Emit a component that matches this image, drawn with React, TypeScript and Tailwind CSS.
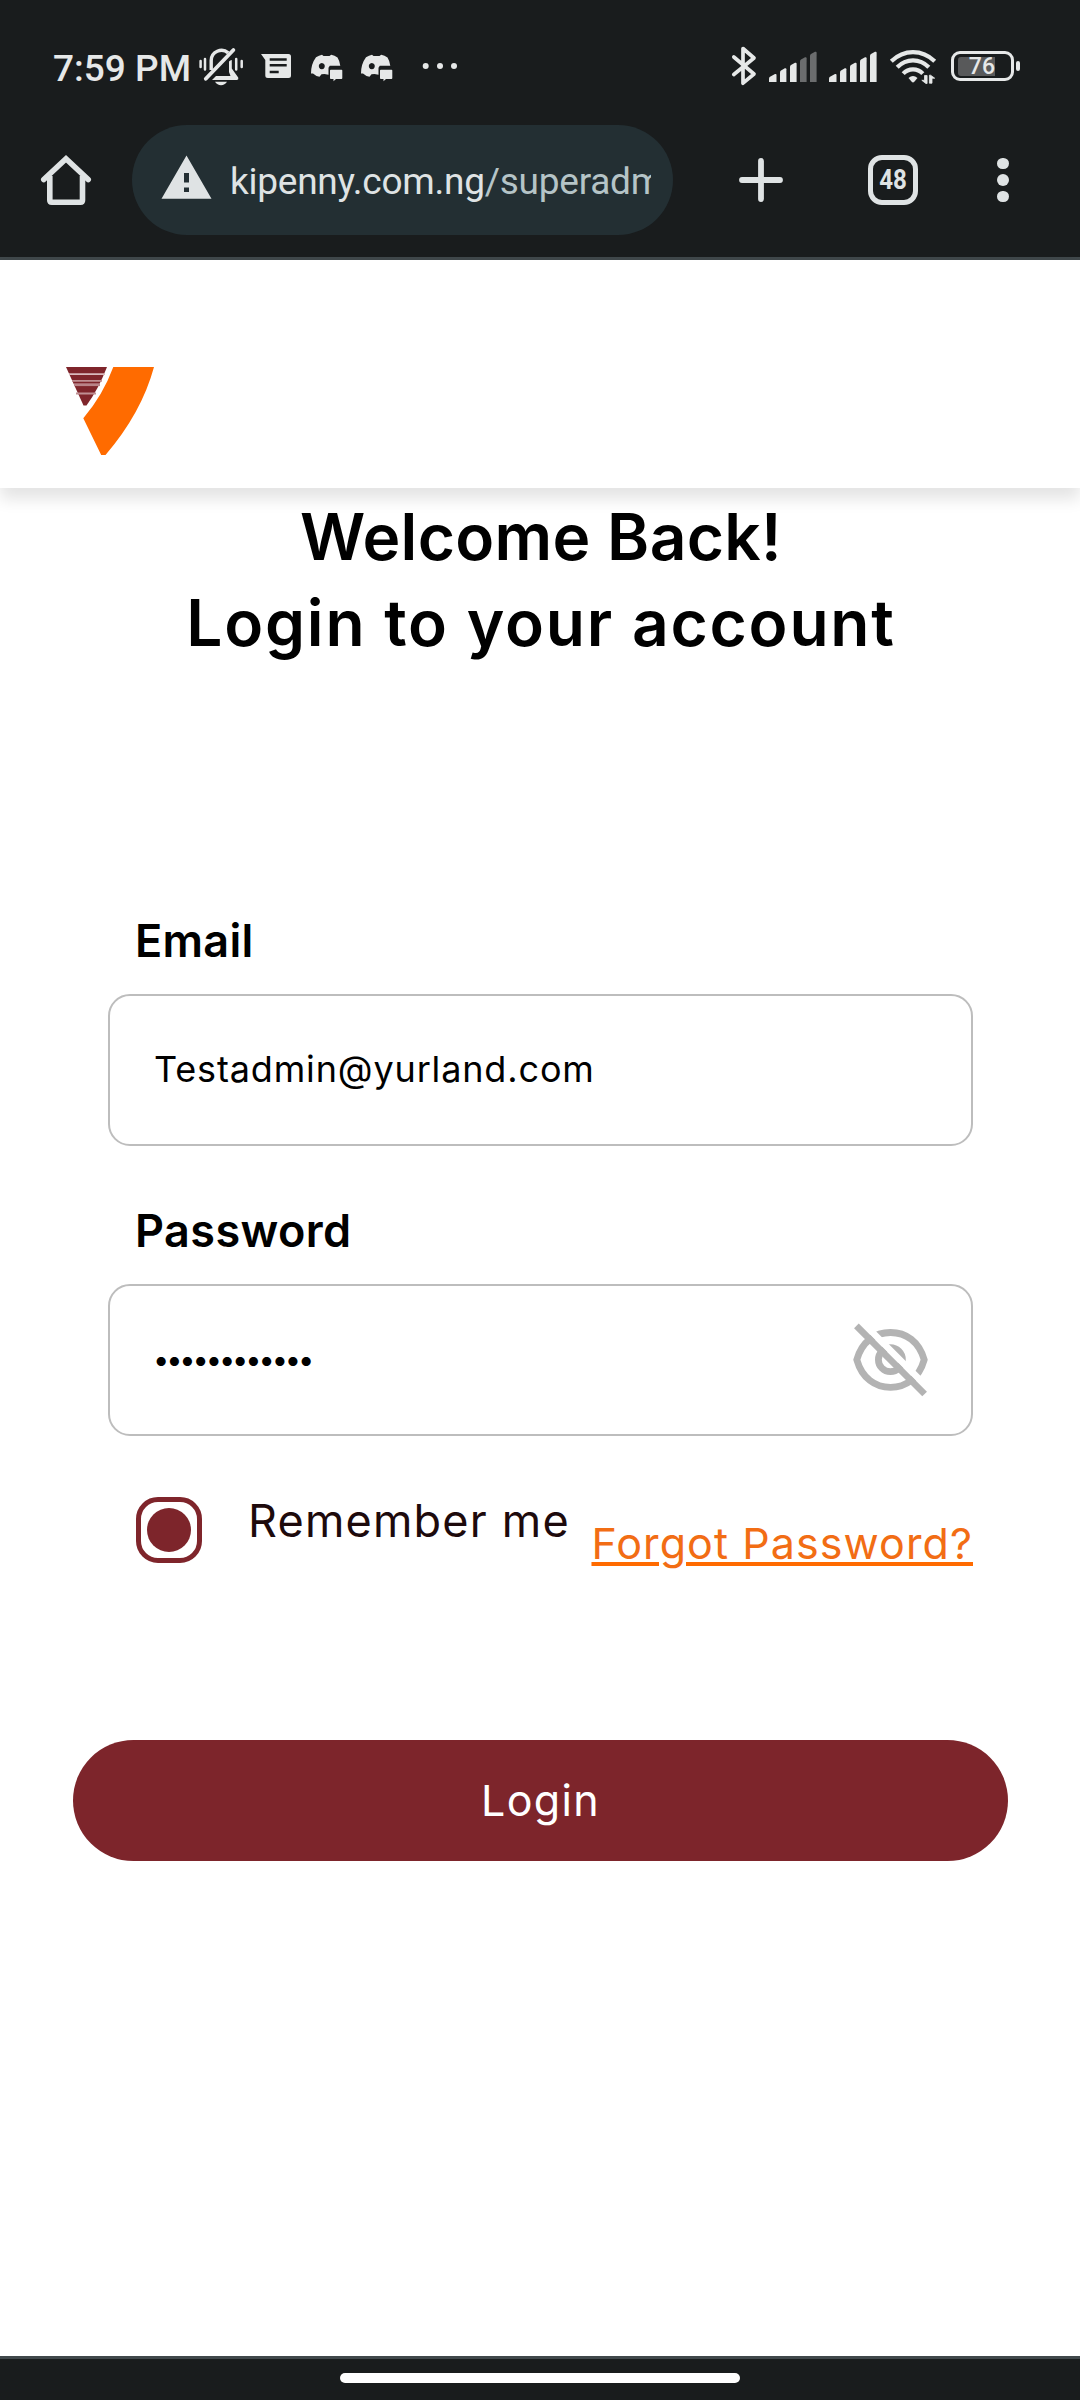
const LIGHT = "#e6e8e8";

function MutedBell() {
  return (
    <svg className="ml-[7px] h-[44px] w-[47px] shrink-0" viewBox="198 45 47 44" fill="none" stroke={LIGHT}>
      <path d="M200.6 61v6M205 59v10.5M236.2 59v10.5M241.7 61v6" strokeWidth="2.5" strokeLinecap="round" />
      <path d="M211.2 70V60.5a10.3 10.3 0 0 1 17-7.6" strokeWidth="3.4" />
      <path d="M205.8 78.8 233.4 50" strokeWidth="3.8" strokeLinecap="round" />
      <path d="M229 61.5q1.200-1.500 2.800-1.500v8.500l6.400 9q.8 2.200-1.200 2.500H212l4-4h14.500l-1.500-4z" fill={LIGHT} stroke="none" />
      <path d="M215 81.8h12q-2.200 3.400-6 3.400t-6-3.400z" fill={LIGHT} stroke="none" />
    </svg>
  );
}

function MessageIcon() {
  return (
    <svg className="ml-[15px] h-[44px] w-[32px] shrink-0" viewBox="260 45 32 44">
      <path d="M261 54h27.500q2.500 0 2.500 2.500v19q0 2.500-2.500 2.500h-20.700q-2.500 0-2.500-2.500V60z" fill={LIGHT} />
      <path d="M269.700 59.500h17M269.700 65.300h17M269.700 72h9" stroke="#191c1d" strokeWidth="2.400" />
    </svg>
  );
}

function DiscordIcon({ className }: { className: string }) {
  return (
    <svg className={className} viewBox="310 45 34 44" fill={LIGHT}>
      <path
        fillRule="evenodd"
        d="M311 73.500Q311 64 316 57.300q3-2 6-2.500l1.500 1.200h6l1.700-1.200q3.500.8 6.300 2.800 2.300 3.700 2.800 8.100h-10.500l-1.300 2v7l-4-.6q-1.500 0-3 .2l-2 2.500q-4-.8-6.500-3.300zM321.800 63a3 3.100 0 1 0 .01 0z"
      />
      <path d="M330.800 69.700h10.700q.8 0 .8.800V78q0 .9-.8.900H336l-2.500 2.400v-2.400h-2.700q-.8 0-.8-.9v-7.500q0-.8.800-.8z" />
    </svg>
  );
}

function BluetoothIcon() {
  return (
    <svg className="h-[44px] w-[28px] shrink-0" viewBox="729 45 28 44" fill="none" stroke={LIGHT} strokeWidth="3.700" strokeLinejoin="round" strokeLinecap="round">
      <path d="M732.800 57l20.200 17-11 9.200V48.500L753 58l-20.200 16.500" />
    </svg>
  );
}

function SignalIcon({ level }: { level: number }) {
  const bars = [
    "M769 82v-3.500q0-1 1-1.700l5-2.800q1.500-.5 1.500 1V82z",
    "M780 82V72.500q0-1.300 1-2l3.800-2.200q1.600-.6 1.600.900V82z",
    "M790 82V67q0-1.300 1-2l4-2.200q1.600-.6 1.600.900V82z",
    "M800 82V61.500q0-1.300 1-2l4-2.200q1.600-.6 1.600.900V82z",
    "M810 82V56q0-1.300 1-2l4-2.200q1.600-.6 1.600.900V82z",
  ];
  return (
    <svg className="ml-[10px] h-[44px] w-[50px] shrink-0" viewBox="768 45 50 44">
      {bars.map((d, i) => (
        <path key={d} d={d} fill={i < level ? LIGHT : "#6b6d6e"} />
      ))}
    </svg>
  );
}

function WifiIcon() {
  return (
    <svg className="ml-[10px] h-[44px] w-[50px] shrink-0" viewBox="888 45 50 44" fill="none" stroke={LIGHT} strokeWidth="4.200">
      <path d="M891.300 61.200q9.500-9.100 21.700-9.100t21.700 9.100" />
      <path d="M897.200 67.300q6.800-6.900 15.800-6.900t15.800 6.900" />
      <path d="M903.200 73.600q4-4.300 9.800-4.300t9.800 4.300" />
      <path d="M908.500 78q4.500-3.800 9 0l-3.200 3.800q-1.300 1.300-2.600 0z" fill={LIGHT} stroke="none" />
      <path d="M921.800 80.300h2.700V75.500h2.600v8h-1.200zM934.700 78.200H932v5h-2.600v-8h1.200z" fill={LIGHT} stroke={LIGHT} strokeWidth="0.800" />
    </svg>
  );
}

function Battery() {
  return (
    <div className="ml-[13px] flex items-center pb-[2px]">
      <div className="flex h-[30px] w-[63px] items-center rounded-[9px] border-[3px] border-[#e6e8e8] pl-[4px]">
        <div className="flex h-[19px] w-[37px] items-center justify-end rounded-l-[3px] bg-[#58595a] text-[23px] leading-[19px] font-medium text-[#e6e8e8]">
          76
        </div>
      </div>
      <div className="ml-[2px] h-[10px] w-[4px] rounded-[2px] bg-[#e6e8e8]" />
    </div>
  );
}

function StatusBar() {
  return (
    <div className="flex h-[89px] items-end pr-[60px] pl-[53px]">
      <span className="h-[44px] w-[138px] shrink-0 pt-[2px] text-[37px] leading-[44px] font-medium whitespace-nowrap text-[#e6e8e8]">
        7:59 PM
      </span>
      <MutedBell />
      <MessageIcon />
      <DiscordIcon className="ml-[18px] h-[44px] w-[34px] shrink-0" />
      <DiscordIcon className="ml-[16px] h-[44px] w-[34px] shrink-0" />
      <svg className="ml-[26px] h-[44px] w-[40px] shrink-0" viewBox="420 45 40 44" fill={LIGHT}>
        <circle cx="425.700" cy="66" r="3" />
        <circle cx="440" cy="66" r="3" />
        <circle cx="454" cy="66" r="3" />
      </svg>
      <div className="ml-auto flex h-[44px] items-center">
        <BluetoothIcon />
        <SignalIcon level={3} />
        <SignalIcon level={5} />
        <WifiIcon />
        <Battery />
      </div>
    </div>
  );
}

function BrowserBar() {
  return (
    <div className="mt-[36px] flex h-[110px] items-center pl-[40px]">
      <svg className="h-[52px] w-[52px] shrink-0" viewBox="40 154 52 52" fill="none" stroke="#dfe3e4" strokeWidth="5.600">
        <path d="M49.800 176v24.300q0 2 2 2h28.700q2 0 2-2V176" />
        <path d="M43.800 179.500 66 158.800l22.200 20.700" strokeLinecap="round" />
      </svg>
      <div className="ml-[40px] flex h-[110px] w-[541px] shrink-0 items-center rounded-full bg-[#232f33] pl-[29px]">
        <svg className="h-[52px] w-[52px] shrink-0" viewBox="161 154 52 52">
          <path fillRule="evenodd" d="M161.500 198.800 186.500 155.500 211.500 198.800zM184 173v9.500h5V173zM184 187.500v4.500h5v-4.500z" fill="#dfe3e4" />
        </svg>
        <div className="ml-[17px] w-[421px] overflow-hidden pt-[3px] text-[37px] leading-[50px] tracking-[-0.250px] whitespace-nowrap text-[#dfe3e4]">
          kipenny.com.ng<span className="text-[#b5c4c7]">/superadm</span>
        </div>
      </div>
      <svg className="ml-[62px] h-[52px] w-[52px] shrink-0" viewBox="735 154 52 52" stroke="#dfe3e4" strokeWidth="5.800" strokeLinecap="round">
        <path d="M761 161v38M742 180h38" />
      </svg>
      <div className="ml-[81px] flex h-[50px] w-[50px] shrink-0 items-center justify-center rounded-[14px] border-[5.500px] border-[#dfe3e4]">
        <span className="scale-x-[0.86] text-[28px] leading-[38px] font-bold text-[#dfe3e4]">48</span>
      </div>
      <div className="ml-[79px] flex flex-col gap-[5px]">
        <i className="size-[11.600px] rounded-full bg-[#dfe3e4]" />
        <i className="size-[11.600px] rounded-full bg-[#dfe3e4]" />
        <i className="size-[11.600px] rounded-full bg-[#dfe3e4]" />
      </div>
    </div>
  );
}

function Logo() {
  return (
    <svg className="h-[88px] w-[88px]" viewBox="66 367 88 88">
      <path d="M66 367h41q-8.500 22-20.500 38.500h-3z" fill="#7f252b" />
      <path d="M69 374.200h36" stroke="#d9b9bc" strokeWidth="1.800" />
      <path d="M72 380.800h30M76 393.500h20" stroke="#c08f93" strokeWidth="1.800" />
      <path d="M74 384.700h26" stroke="#b98388" strokeWidth="2.800" />
      <path d="M113.300 367H154q-12.500 46-48.500 88h-4.300L83.300 418.300Q103 395 113.300 367z" fill="#ff6b00" />
    </svg>
  );
}

function EyeOff() {
  return (
    <svg className="h-[76px] w-[78px]" viewBox="852 1321 78 76" fill="none" stroke="#b3b3b3" strokeWidth="6.800">
      <path d="M856.800 1358.700C862 1340.500 875 1331.500 890.500 1331.500S919 1340.500 924.200 1358.700C919 1377 906 1386.400 890.500 1386.400S862 1377 856.800 1358.700z" />
      <circle cx="890.400" cy="1358.700" r="12" />
      <path d="M859 1318 931 1390" stroke="#fff" strokeWidth="6.600" />
      <path d="M856.400 1324.800 924.600 1393" strokeWidth="6.600" />
    </svg>
  );
}

export default function App() {
  return (
    <div className="flex h-[2400px] w-[1080px] flex-col overflow-hidden bg-white font-['Inter',sans-serif] text-black">
      <div className="h-[260px] shrink-0 border-b-[3px] border-[#40484b] bg-[#191c1d] font-['Roboto',sans-serif]">
        <StatusBar />
        <BrowserBar />
      </div>

      <header className="h-[228px] shrink-0 bg-white pt-[107px] pl-[66px] shadow-[0_11px_15px_rgba(0,0,0,0.11)]">
        <Logo />
      </header>

      <main className="flex flex-1 flex-col">
        <h1 className="relative pt-[6px] text-center text-[64px] leading-[86px] font-semibold">
          <span className="block pl-[2px] tracking-[0.330px]">Welcome Back!</span>
          <span className="block pl-[2px] tracking-[1.800px]">Login to your account</span>
        </h1>

        <form className="mt-[245px] flex flex-col pr-[107px] pl-[108px]">
          <label className="pl-[27px] text-[45px] leading-[60px] font-semibold tracking-[0.300px]">Email</label>
          <div className="mt-[23px] flex h-[152px] items-center rounded-[22px] border-2 border-[#bdbdbd] pb-[2px] pl-[44px] text-[36px] tracking-[0.850px]">
            Testadmin@yurland.com
          </div>

          <label className="mt-[55px] pl-[27px] text-[45px] leading-[60px] font-semibold tracking-[0.400px]">Password</label>
          <div className="mt-[23px] flex h-[152px] items-center justify-between rounded-[22px] border-2 border-[#bdbdbd] pr-[41px] pl-[43px]">
            <span className="text-[29px] tracking-[-3.130px]">••••••••••••</span>
            <EyeOff />
          </div>

          <div className="mt-[55px] flex h-[72px] items-start pl-[28px]">
            <span className="mt-[6px] flex h-[66px] w-[66px] items-center justify-center rounded-[22px] border-[5px] border-[#7f252b]">
              <span className="size-[44px] rounded-full bg-[#7d252b]" />
            </span>
            <span className="ml-[46px] text-[45px] leading-[60px] tracking-[1.200px] text-[#1d0a0c]">Remember me</span>
            <a className="mt-[26px] ml-auto text-[43px] leading-[52px] tracking-[1.080px] whitespace-nowrap text-[#f26d14] underline decoration-[#ff6b00] decoration-[4px] underline-offset-[3px]">
              Forgot Password?
            </a>
          </div>
        </form>

        <button className="mt-[177px] ml-[73px] h-[121px] w-[935px] rounded-full bg-[#7d252b] text-[43px] tracking-[1.300px] text-white">
          Login
        </button>
      </main>

      <div className="flex h-[44px] shrink-0 justify-center border-t-[3px] border-[#40484b] bg-[#191c1d] pt-[14px]">
        <div className="h-[10px] w-[400px] rounded-full bg-white" />
      </div>
    </div>
  );
}
